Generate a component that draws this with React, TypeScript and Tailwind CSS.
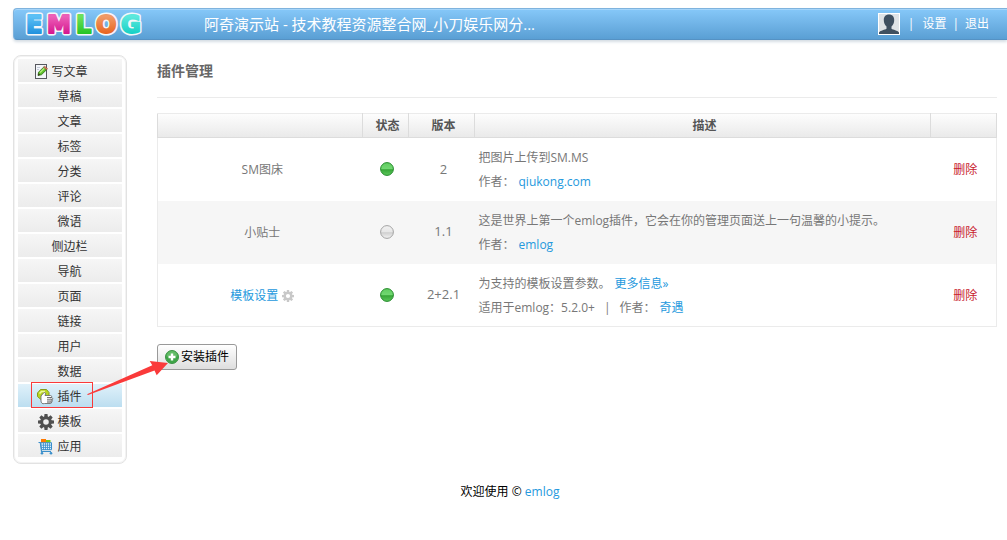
import React from 'react';

interface MenuItem {
  label: string;
  icon?: React.ReactNode;
  active?: boolean;
}

interface Plugin {
  name: string;
  configurable?: boolean;
  enabled: boolean;
  version: string;
  description: string;
  moreInfo?: boolean;
  compat?: string;
  author: string;
}

const GearIcon: React.FC<{ className: string }> = ({ className }) => (
  <svg viewBox="0 0 16 16" className={className} fill="currentColor">
    {[0, 45, 90, 135].map((angle) => (
      <path key={angle} d="M6.500 0h3l.5 4.500H6zM6 11.500h4L9.500 16h-3z" transform={`rotate(${angle} 8 8)`} />
    ))}
    <circle cx="8" cy="8" r="4.300" fill="none" stroke="currentColor" strokeWidth="3" />
  </svg>
);

const WriteIcon: React.FC = () => (
  <svg viewBox="0 0 14 16" className="h-4 w-3.5">
    <rect x="1.500" y=".5" width="11" height="14" fill="#f4f6fa" stroke="#56585e" />
    <path d="M3 3.500h3M3 5.500h2" stroke="#c3cad8" />
    <path d="M4 11.500l.6-3.300 5-5 3 2.500-5.100 5z" fill="#5fc22c" stroke="#27670f" strokeWidth=".8" />
    <path d="M6 8.500l4.500-4.500" stroke="#b5ef7e" strokeWidth="1.200" />
    <path d="M9.600 3.200l1-1 3 2.500-1 1z" fill="#e58a6d" stroke="#8b3c20" strokeWidth=".6" />
    <path d="M4 11.500l.6-2.200 1.500 1.500z" fill="#3b2d18" />
  </svg>
);

const PluginIcon: React.FC = () => (
  <svg viewBox="0 0 17 16" className="h-4 w-[17px]">
    <path d="M.5 4L3.500.5h6l2.500 3v4L9 11H4.500L.5 7.500z" fill="#b9d520" stroke="#869b1c" strokeLinejoin="round" />
    <path d="M2.500 4.500L4.500 2.500H8" stroke="#effa9d" strokeWidth="1.700" fill="none" />
    <path
      d="M4 8.500V7l2.500-3c.9-1 2.600-.3 2 1l-.5 1.500h5.500c1.600 0 1.600 2.200 0 2.200h1.200c1.500 0 1.500 2.200 0 2.200h-.2c1.300 0 1.300 2 0 2h-.7c1 0 1 1.600-.3 1.600H7.500C5.300 15.500 4 13.500 4 12z"
      fill="#fff"
      stroke="#6d7070"
      strokeWidth=".9"
      strokeLinejoin="round"
    />
    <path d="M10 8.700h4.500M10 10.900h5M10 13h4.500" stroke="#555" />
  </svg>
);

const CartIcon: React.FC = () => (
  <svg viewBox="0 0 16 16" className="h-4 w-4">
    <path d="M3 0h5v4H3z" fill="#ff7a00" />
    <path d="M8 1h4.500v3H8z" fill="#78c916" />
    <path d="M.5 3.500h1.800l1.200 9H13" fill="none" stroke="#3a8fcb" strokeWidth="1.200" />
    <path d="M2.800 3.700h10.700v7H3.600z" fill="#d9effc" stroke="#3a8fcb" />
    <path d="M5.500 4v7M7.500 4v7M9.500 4v7M11.500 4v7M3.500 6.200h10M3.500 8.500h10" stroke="#3a8fcb" strokeWidth=".8" />
    <circle cx="4" cy="14.200" r="1.300" fill="#3a8fcb" />
    <circle cx="13" cy="14.200" r="1.300" fill="#3a8fcb" />
  </svg>
);

const AddIcon: React.FC = () => (
  <svg viewBox="0 0 14 14" className="h-3.5 w-3.5">
    <circle cx="7" cy="7" r="6.500" fill="#3fa548" stroke="#3c9345" />
    <path d="M1.500 6.500a5.500 5.500 0 0 1 11 0z" fill="#62bb66" />
    <path d="M7 3.500v7M3.500 7h7" stroke="#fff" strokeWidth="2.400" />
  </svg>
);

const StatusIcon: React.FC<{ enabled: boolean }> = ({ enabled }) => (
  <svg viewBox="0 0 14 14" className="h-3.5 w-3.5">
    <defs>
      <linearGradient id={enabled ? 'on' : 'off'} x1="0" y1="0" x2="0" y2="1">
        <stop offset="0" stopColor={enabled ? '#5fcb5f' : '#f2f2f2'} />
        <stop offset=".5" stopColor={enabled ? '#72d872' : '#e6e6e6'} />
        <stop offset=".55" stopColor={enabled ? '#37a637' : '#cfcfcf'} />
        <stop offset="1" stopColor={enabled ? '#5cc85c' : '#f4f4f4'} />
      </linearGradient>
    </defs>
    <circle cx="7" cy="7" r="6.400" fill={enabled ? 'url(#on)' : 'url(#off)'} stroke={enabled ? '#258a2c' : '#a3a3a3'} />
  </svg>
);

const logoLetters = [
  { letter: 'E', x: 1, from: '#5cc0f5', to: '#1e8fdc' },
  { letter: 'M', x: 22, from: '#ec5fb8', to: '#d4128c' },
  { letter: 'L', x: 51, from: '#6de05c', to: '#22c322' },
  { letter: 'O', x: 71, from: '#f19a66', to: '#e6611c' },
  { letter: 'G', x: 96, from: '#5ce8dc', to: '#12cfc4' },
];

// Each letter is drawn twice: a white outline below, the thickened colour on top
const Logo: React.FC = () => (
  <svg viewBox="0 0 120 30" className="h-[30px] w-[120px] overflow-visible" role="img" aria-label="EMLOG">
    <defs>
      {logoLetters.map(({ letter, from, to }) => (
        <linearGradient key={letter} id={`logo-${letter}`} x1="0" y1="0" x2="0" y2="1">
          <stop offset=".2" stopColor={from} />
          <stop offset=".85" stopColor={to} />
        </linearGradient>
      ))}
    </defs>
    {logoLetters.map(({ letter, x }) => (
      <g key={letter} strokeLinejoin="round" className="font-['DejaVu_Sans',sans-serif] text-[24px] font-bold">
        <text x={x} y="24" fill="#f4f7fa" stroke="#f4f7fa" strokeWidth="5" aria-hidden="true">{letter}</text>
        <text x={x} y="24" fill={`url(#logo-${letter})`} stroke={`url(#logo-${letter})`} strokeWidth="2">{letter}</text>
      </g>
    ))}
  </svg>
);

const Avatar: React.FC = () => (
  <svg viewBox="0 0 22 22" className="h-[22px] w-[22px]">
    <rect width="22" height="22" fill="#fff" />
    <rect x="1" y="1" width="20" height="20" fill="#dfe3e6" />
    <path
      d="M11 1.500c3.300 0 5.200 2.200 5.200 5.500 0 2.700-1 5-2.700 6.500v2.300c1.500 1.200 6 1.500 7.500 3.700V21H1v-1.500c1.500-2.200 6-2.500 7.500-3.700v-2.300C6.800 12 5.800 9.700 5.800 7c0-3.300 1.900-5.500 5.200-5.500z"
      fill="#3f5060"
    />
  </svg>
);

const menu: MenuItem[] = [
  { label: '写文章', icon: <WriteIcon /> },
  { label: '草稿' },
  { label: '文章' },
  { label: '标签' },
  { label: '分类' },
  { label: '评论' },
  { label: '微语' },
  { label: '侧边栏' },
  { label: '导航' },
  { label: '页面' },
  { label: '链接' },
  { label: '用户' },
  { label: '数据' },
  { label: '插件', icon: <PluginIcon />, active: true },
  { label: '模板', icon: <GearIcon className="h-4 w-4 text-[#505050]" /> },
  { label: '应用', icon: <CartIcon /> },
];

const plugins: Plugin[] = [
  { name: 'SM图床', enabled: true, version: '2', description: '把图片上传到SM.MS', author: 'qiukong.com' },
  {
    name: '小贴士',
    enabled: false,
    version: '1.1',
    description: '这是世界上第一个emlog插件，它会在你的管理页面送上一句温馨的小提示。',
    author: 'emlog',
  },
  {
    name: '模板设置',
    configurable: true,
    enabled: true,
    version: '2+2.1',
    description: '为支持的模板设置参数。',
    moreInfo: true,
    compat: '适用于emlog：5.2.0+',
    author: '奇遇',
  },
];

const Header: React.FC = () => (
  <header className="flex h-8 items-center rounded-l border border-r-0 border-t-[#7fb3dd] border-l-[#7fb3dd] border-b-[#5592c4] bg-linear-to-b from-[#86c8f9] to-[#5a9fd4] pr-[18px] pl-[11px] text-white shadow-[0_2px_3px_#d5dde4,inset_0_1px_0_#a5d5fa]">
    <a href="#home"><Logo /></a>
    <h1 className="ml-[59px] min-w-0 flex-1 truncate text-[15px] leading-6">
      阿奇演示站 - 技术教程资源整合网_小刀娱乐网分...
    </h1>
    <nav className="flex items-center">
      <a href="#profile" aria-label="个人资料"><Avatar /></a>
      <span className="mx-2">|</span>
      <a href="#settings">设置</a>
      <span className="mx-1.5">|</span>
      <a href="#logout">退出</a>
    </nav>
  </header>
);

// Callout pointing from the plugin menu entry to the install button
const Callout: React.FC = () => (
  <>
    <span className="pointer-events-none absolute -top-0.5 left-[13px] h-[26px] w-[62px] border border-[#fa3a3a]" />
    <svg viewBox="0 0 82 36" className="pointer-events-none absolute -top-6 left-[69px] z-10 h-9 w-[82px]">
      <path d="M0 34.300L65.300 5.300 62.700 1 81 3 69.700 15.300 67.500 10.500 1 35z" fill="#fa3a3a" />
    </svg>
  </>
);

const Sidebar: React.FC = () => (
  <nav className="w-[114px] shrink-0 rounded-lg border border-[#e2e2e2] p-[3px] shadow-[inset_0_0_0_1px_#f3f3f3]">
    <ul className="flex flex-col gap-0.5 px-px pb-[3px] text-[#333]">
      {menu.map((item) => (
        <li key={item.label} className="relative">
          <a
            href="#menu"
            className={`grid h-[23px] grid-cols-[1fr_auto_1fr] items-center bg-linear-to-b pt-0.5 pr-px ${
              item.active ? 'from-[#e0f1fa] to-[#bcdef0]' : 'from-[#f6f6f6] to-[#ececec]'
            }`}
          >
            <span className="flex justify-end pr-[3px]">{item.icon}</span>
            <span>{item.label}</span>
          </a>
          {item.active && <Callout />}
        </li>
      ))}
    </ul>
  </nav>
);

const PluginRow: React.FC<{ plugin: Plugin }> = ({ plugin }) => (
  <tr className="h-[63px] even:bg-[#f6f6f6]">
    <td className="pt-0.5 pl-1 text-center">
      {plugin.configurable ? (
        <a href="#config" className="inline-flex items-center gap-1 text-[#2599dd]">
          {plugin.name}
          <GearIcon className="h-3 w-3 text-[#c8c8c8]" />
        </a>
      ) : (
        plugin.name
      )}
    </td>
    <td className="pl-0.5">
      <button type="button" className="mx-auto block" aria-label={plugin.enabled ? '禁用' : '启用'}>
        <StatusIcon enabled={plugin.enabled} />
      </button>
    </td>
    <td className="pl-1 text-center text-[13px]">{plugin.version}</td>
    <td className="pt-0.5 pl-1 leading-6">
      <p>
        {plugin.description}
        {plugin.moreInfo && <a href="#more" className="ml-1 text-[#2599dd]">更多信息»</a>}
      </p>
      <p>
        {plugin.compat && <span>{plugin.compat}<span className="mx-[9px]">|</span></span>}
        作者：
        <a href="#author" className="ml-1 text-[#2599dd]">{plugin.author}</a>
      </p>
    </td>
    <td className="pt-0.5 pl-1 text-center"><a href="#delete" className="text-[#c8202c]">删除</a></td>
  </tr>
);

const App: React.FC = () => (
  <div className="bg-white pt-2 pl-[13px] font-['Open_Sans','Noto_Sans_CJK_SC',sans-serif] text-xs text-[#777]">
    <Header />
    <div className="mt-[15px] flex items-start">
      <Sidebar />
      <main className="mr-2.5 ml-[30px] min-w-0 flex-1">
        <h2 className="border-b border-[#ebebeb] pt-1 pb-3.5 text-sm leading-6 font-bold text-[#666]">插件管理</h2>
        <table className="mt-[15px] w-full table-fixed border-collapse border border-[#ebebeb]">
          <colgroup>
            <col className="w-[205px]" />
            <col className="w-[46px]" />
            <col className="w-[66px]" />
            <col />
            <col className="w-[66px]" />
          </colgroup>
          <thead>
            <tr className="h-6 bg-linear-to-b from-[#fdfdfd] to-[#e9e9e9] text-[#555]">
              {['', '状态', '版本', '描述', ''].map((title, i) => (
                <th key={i} className="border border-t-[#ebebeb] border-r-[#dcdcdc] border-b-[#dcdcdc] border-l-[#dcdcdc] pl-1 font-bold">{title}</th>
              ))}
            </tr>
          </thead>
          <tbody>
            {plugins.map((plugin) => <PluginRow key={plugin.name} plugin={plugin} />)}
          </tbody>
        </table>
        <button
          type="button"
          className="mt-[17px] flex h-[26px] items-center gap-0.5 rounded-[3px] border border-[#999] bg-linear-to-b from-white to-[#dedede] px-[7px] text-black"
        >
          <AddIcon />
          安装插件
        </button>
      </main>
    </div>
    <footer className="mt-4 text-center leading-6 text-black">
      欢迎使用 © <a href="#emlog" className="text-[#2599dd]">emlog</a>
    </footer>
  </div>
);

export default App;
